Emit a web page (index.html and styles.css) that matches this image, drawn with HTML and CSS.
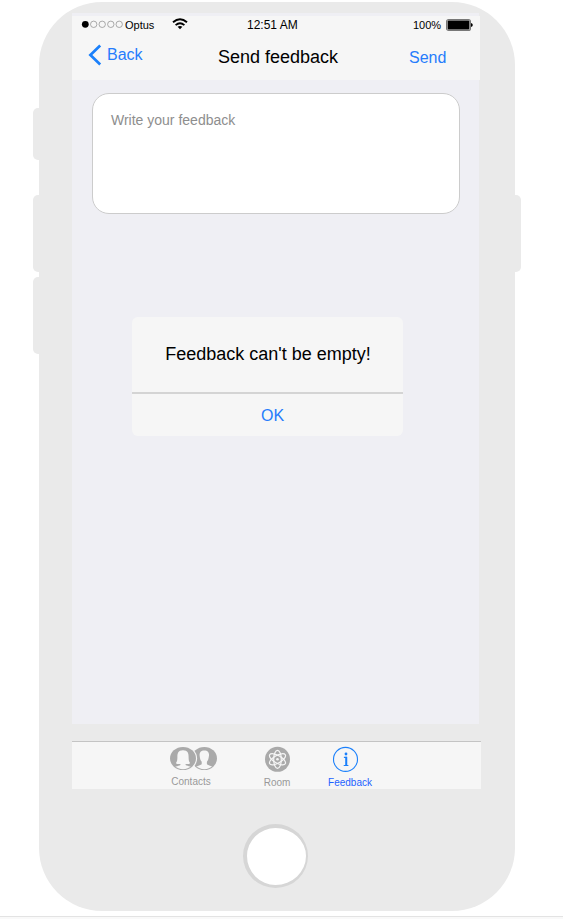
FILE: index.html
```
<!DOCTYPE html>
<html lang="en">
<head>
<meta charset="utf-8">
<title>Send feedback</title>
<link rel="stylesheet" href="styles.css">
</head>
<body>
<main class="phone">
  <i class="key mute"></i><i class="key volume-up"></i><i class="key volume-down"></i><i class="key power"></i>
  <section class="screen">
    <header class="header">
      <div class="status">
        <svg class="signal" width="42" height="9" viewBox="0 0 42 9"><circle cx="4.3" cy="4.3" r="3.4"/><g fill="none" stroke="#888" stroke-width=".7"><circle cx="12.7" cy="4.3" r="3.2"/><circle cx="21.2" cy="4.3" r="3.2"/><circle cx="29.8" cy="4.3" r="3.2"/><circle cx="38.2" cy="4.3" r="3.2"/></g></svg>
        <span class="carrier">Optus</span>
        <svg class="wifi" width="16" height="12" viewBox="0 0 16 12"><g fill="none" stroke="#000" stroke-width="1.9"><path d="M1 4.3Q8-1.7 15 4.3"/><path d="M3.6 7.1Q8 3.3 12.4 7.1"/></g><path d="M5.6 8.8Q8 7.1 10.4 8.8L8 11.2Z"/></svg>
        <span class="time">12:51 AM</span>
        <span class="percent">100%</span>
        <svg class="battery" width="28" height="12" viewBox="0 0 28 12"><rect x=".6" y=".6" width="23.8" height="10.8" rx="2" fill="#fff" stroke="#777" stroke-width="1.2"/><rect x="1.6" y="1.6" width="21.8" height="8.8" rx="1"/><path d="M25 4Q26.8 4.3 26.8 6Q26.8 7.7 25 8Z"/></svg>
      </div>
      <nav class="nav">
        <svg class="chevron" width="14" height="22" viewBox="0 0 14 22"><path d="M12.2 1.5L2.4 11L12.2 20.5" fill="none" stroke="#1b80fb" stroke-width="2.7"/></svg>
        <a class="back">Back</a>
        <h1 class="title">Send feedback</h1>
        <a class="send">Send</a>
      </nav>
    </header>
    <div class="field">Write your feedback</div>
    <div class="alert">
      <p class="message">Feedback can't be empty!</p>
      <button class="ok">OK</button>
    </div>
  </section>
  <footer class="tabs">
    <div class="tab contacts">
      <svg width="48" height="24" viewBox="0 0 48 24"><defs><clipPath id="front"><ellipse cx="13" cy="11.5" rx="12" ry="10.7"/></clipPath><clipPath id="rear"><ellipse cx="34.3" cy="11.5" rx="12" ry="10.7"/></clipPath></defs>
        <ellipse cx="34.3" cy="11.5" rx="12.7" ry="11.5" fill="#aaa"/>
        <path clip-path="url(#rear)" fill="#f6f6f6" d="M34.3 3.4C38.4 3.4 39.4 6 38.9 9.3C38.6 12 37.9 13.8 36.9 14.8V17.2C39 18.8 43.5 18.8 45.5 23H23C25 18.8 29.5 18.8 31.7 17.2V14.8C30.6 13.8 30 12 29.7 9.3C29.3 6 30.2 3.4 34.3 3.4Z"/>
        <ellipse cx="13" cy="11.5" rx="14.1" ry="12.8" fill="#f6f6f6"/><ellipse cx="13" cy="11.5" rx="13" ry="11.5" fill="#aaa"/>
        <path clip-path="url(#front)" fill="#f6f6f6" d="M13 3.2C18 3.2 18.6 6.6 18.6 10C18.6 13 18.9 14.9 20.2 16.2C19 17.1 17 17.2 15.6 16.9V17.9C18 19.3 22 19 24 23H2C4 19 8 19.3 10.4 17.9V16.9C9 17.2 7 17.1 5.8 16.2C7.1 14.9 7.4 13 7.4 10C7.4 6.6 8 3.2 13 3.2Z"/>
      </svg><span>Contacts</span>
    </div>
    <div class="tab room">
      <svg width="26" height="26" viewBox="0 0 26 26"><circle cx="13.5" cy="12.3" r="12.5" fill="#aaa"/><g fill="none" stroke="#f6f6f6" stroke-width="1.2"><ellipse cx="13.5" cy="12.3" rx="3.8" ry="9"/><ellipse cx="13.5" cy="12.3" rx="3.8" ry="9" transform="rotate(60 13.5 12.3)"/><ellipse cx="13.5" cy="12.3" rx="3.8" ry="9" transform="rotate(120 13.5 12.3)"/></g><circle cx="13.5" cy="12.3" r="1.3" fill="#f6f6f6"/></svg><span>Room</span>
    </div>
    <div class="tab feedback">
      <svg width="26" height="26" viewBox="0 0 26 26"><circle cx="12.5" cy="12.4" r="12" fill="none" stroke="#1b80fb" stroke-width="1.1"/><circle cx="13" cy="7" r="1.4" fill="#1b80fb"/><path d="M10.9 10.4H13.2V18.3M10.7 18.5H15.4" fill="none" stroke="#1b80fb" stroke-width="1.2"/><path d="M13.3 9.8V18.6" stroke="#1b80fb" stroke-width="1.9"/></svg><span>Feedback</span>
    </div>
  </footer>
  <div class="home"></div>
</main>
<div class="page-edge"></div>
</body>
</html>
```

FILE: styles.css
```
* { box-sizing: border-box; }
body { margin: 0; height: 919px; overflow: hidden; padding-top: 2px; background: #fff; font-family: "Liberation Sans", Arial, sans-serif; color: #000; }
svg { display: block; flex: none; overflow: visible; }
.phone { position: relative; width: 476px; height: 909px; margin-left: 39px; padding: 11px 0 0 33px; border-radius: 63px; background: #eaeaea; }
.key { position: absolute; left: -6px; width: 10px; height: 77px; border-radius: 5px 0 0 5px; background: #eaeaea; }
.mute { top: 106px; height: 52px; }
.volume-up { top: 193px; }
.volume-down { top: 275px; }
.power { top: 193px; left: auto; right: -6px; border-radius: 0 5px 5px 0; }
.screen { width: 407px; height: 711px; padding-top: 3px; background: #efeff4; }
.header { width: 408px; height: 64px; background: #f6f6f6; }
.status { display: flex; align-items: center; height: 17px; padding-left: 9px; font-size: 11px; line-height: 16px; }
.carrier { width: 49px; padding-left: 2px; }
.wifi { margin-top: -1px; }
.time { margin-left: 59px; width: 166px; font-size: 12px; }
.percent { width: 33px; }
.nav { display: flex; align-items: flex-start; padding-left: 16px; line-height: 20px; }
.chevron { margin-top: 11px; }
.back { width: 111px; margin: 12px 0 0 5px; font-size: 16px; color: #267cfc; }
.title { width: 191px; margin: 14px 0 0; font-size: 18px; font-weight: 400; line-height: 20px; }
.send { margin-top: 15px; font-size: 16px; color: #267cfc; }
.field { width: 368px; height: 121px; margin: 13px 0 0 20px; padding: 16px 18px; border: 1px solid #ccc; border-radius: 17px; background: #fff; font-size: 14px; line-height: 20px; color: #8e8e8e; }
.alert { width: 271px; height: 119px; margin: 103px 0 0 60px; border-radius: 6px; background: #f6f6f6; text-align: center; }
.message { height: 77px; margin: 0; padding: 27px 0 0 1px; border-bottom: 2px solid #d4d4d4; font-size: 18px; line-height: 20px; }
.ok { display: block; width: 100%; height: 42px; padding: 1px 0 0 10px; border: 0; background: none; font: 16px/42px "Liberation Sans", Arial, sans-serif; color: #267cfc; }
.tabs { display: flex; width: 409px; height: 48px; margin-top: 17px; padding-left: 98px; border-top: 1px solid #c4c4c4; background: #f6f6f6; font-size: 10px; line-height: 12px; color: #999; }
.tab { display: flex; flex-direction: column; align-items: center; padding-top: 5px; }
.contacts { width: 48px; }
.contacts span { margin: 5px 6px 0 0; }
.room { width: 28px; margin-left: 45px; }
.room span, .feedback span { margin-top: 4px; }
.feedback { width: 46px; margin-left: 36px; color: #1d62ff; }
.feedback svg { margin-right: 9px; }
.home { width: 65px; height: 64px; margin: 35px 0 0 171px; border: solid #d6d6d6; border-width: 4px 2px 3px 4px; border-radius: 50%; background: #fff; }
.page-edge { height: 3px; margin-top: 5px; border-top: 1px solid #e3e3e3; background: #f9f9f9; }
```
